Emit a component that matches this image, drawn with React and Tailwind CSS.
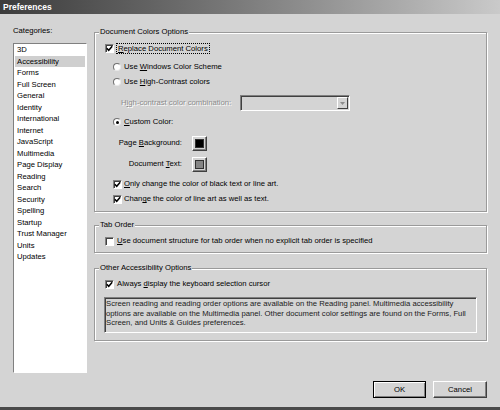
import React from "react";

const categories = [
  "3D",
  "Accessibility",
  "Forms",
  "Full Screen",
  "General",
  "Identity",
  "International",
  "Internet",
  "JavaScript",
  "Multimedia",
  "Page Display",
  "Reading",
  "Search",
  "Security",
  "Spelling",
  "Startup",
  "Trust Manager",
  "Units",
  "Updates",
];

const Check = ({ checked }) => (
  <span className="w-[9px] h-[9px] shrink-0 bg-white border border-t-[#808080] border-l-[#808080] border-b-white border-r-white shadow-[inset_1px_1px_0_#404040] flex items-center justify-center">
    {checked && (
      <svg width="7" height="7" viewBox="0 0 7 7">
        <path d="M0.8 3.3 L2.7 5.3 L6.2 1.2" fill="none" stroke="#000" strokeWidth="1.5" />
      </svg>
    )}
  </span>
);

const Radio = ({ checked }) => (
  <span className="w-[8px] h-[8px] shrink-0 rounded-full bg-white border border-t-[#707070] border-l-[#707070] border-b-[#e8e8e8] border-r-[#e8e8e8] flex items-center justify-center">
    {checked && <span className="w-[3px] h-[3px] rounded-full bg-black" />}
  </span>
);

const Swatch = ({ color }) => (
  <span className="w-[15px] h-[15px] border border-t-white border-l-white border-b-[#404040] border-r-[#404040] shadow-[inset_-1px_-1px_0_#808080] flex items-center justify-center">
    <span className={`w-[9px] h-[9px] border border-[#303030] ${color}`} />
  </span>
);

const Group = ({ title, children, className = "" }) => (
  <fieldset className={`border border-[#9a9a9a] shadow-[inset_1px_1px_0_#fff,1px_1px_0_#fff] px-0 ${className}`}>
    <legend className="ml-[4px] px-[1px] leading-[10px] bg-[#d4d4d4]">{title}</legend>
    {children}
  </fieldset>
);

export default function App() {
  return (
    <div className="w-[500px] h-[410px] bg-[#d4d4d4] flex flex-col overflow-hidden border-b-[3px] border-[#4a4a4a] font-['Liberation_Sans',Arial,sans-serif] text-[7.7px] text-black">
      {/* title bar */}
      <div className="h-[14px] shrink-0 flex items-center pl-[3px] bg-linear-to-r from-[#3c3c3c] via-[#7e7e7e] to-[#cacaca]">
        <span className="text-white font-bold text-[8.5px] leading-none">Preferences</span>
      </div>

      <div className="flex flex-1 px-[13px]">
        {/* categories */}
        <div className="w-[74px] flex flex-col">
          <div className="mt-[12px] leading-[10px]">Categories:</div>
          <div className="mt-[7px] h-[330px] bg-white border border-t-[#808080] border-l-[#808080] border-b-white border-r-white flex flex-col px-[1px]">
            {categories.map((c) => (
              <div
                key={c}
                className={`h-[11.5px] leading-[11.5px] pl-[2px] ${c === "Accessibility" ? "bg-[#cfcfcf]" : ""}`}
              >
                {c}
              </div>
            ))}
          </div>
        </div>

        {/* options */}
        <div className="ml-[7px] w-[393px] flex flex-col">
          <Group title="Document Colors Options" className="mt-[13px] pb-[5px]">
            <div className="mt-[4px] h-[14px] flex items-center pl-[10px] gap-[2px]">
              <Check checked />
              <span className="border border-dotted border-black px-[1px] leading-[9px]">
                <span className="underline">R</span>eplace Document Colors
              </span>
            </div>
            <div className="mt-[5px] h-[14px] flex items-center pl-[18px] gap-[3px]">
              <Radio />
              <span>
                Use <span className="underline">W</span>indows Color Scheme
              </span>
            </div>
            <div className="mt-[1px] h-[14px] flex items-center pl-[18px] gap-[3px]">
              <Radio />
              <span>
                Use <span className="underline">H</span>igh-Contrast colors
              </span>
            </div>
            <div className="mt-[6px] h-[16px] flex items-center pl-[26px]">
              <span className="w-[119px] text-[#8c8c8c] [text-shadow:1px_1px_0_#fff]">
                H<span className="underline">i</span>gh-contrast color combination:
              </span>
              <span className="w-[110px] h-[16px] border border-t-[#808080] border-l-[#808080] border-b-white border-r-white shadow-[inset_1px_1px_0_#404040] flex justify-end items-center pr-[1px]">
                <span className="w-[11px] h-[12px] border border-t-white border-l-white border-b-[#404040] border-r-[#404040] flex items-center justify-center">
                  <svg width="5" height="3" viewBox="0 0 5 3">
                    <path d="M0 0 L5 0 L2.5 3 Z" fill="#8c8c8c" />
                  </svg>
                </span>
              </span>
            </div>
            <div className="mt-[4px] h-[14px] flex items-center pl-[18px] gap-[3px]">
              <Radio checked />
              <span>
                <span className="underline">C</span>ustom Color:
              </span>
            </div>
            <div className="mt-[6px] h-[16px] flex items-center">
              <span className="w-[87px] text-right">
                Page <span className="underline">B</span>ackground:
              </span>
              <span className="ml-[10px]">
                <Swatch color="bg-black" />
              </span>
            </div>
            <div className="mt-[5px] h-[16px] flex items-center">
              <span className="w-[87px] text-right">
                Document <span className="underline">T</span>ext:
              </span>
              <span className="ml-[10px]">
                <Swatch color="bg-[#858585]" />
              </span>
            </div>
            <div className="mt-[5px] h-[14px] flex items-center pl-[18px] gap-[2px]">
              <Check checked />
              <span>
                <span className="underline">O</span>nly change the color of black text or line art.
              </span>
            </div>
            <div className="mt-[1px] h-[14px] flex items-center pl-[18px] gap-[2px]">
              <Check checked />
              <span>
                Chan<span className="underline">g</span>e the color of line art as well as text.
              </span>
            </div>
          </Group>

          <Group title="Tab Order" className="mt-[8px] pb-[4px]">
            <div className="mt-[4px] h-[14px] flex items-center pl-[10px] gap-[3px]">
              <Check />
              <span>
                <span className="underline">U</span>se document structure for tab order when no explicit tab order is specified
              </span>
            </div>
          </Group>

          <Group title="Other Accessibility Options" className="mt-[10px] pb-[7px]">
            <div className="mt-[4px] h-[14px] flex items-center pl-[10px] gap-[3px]">
              <Check checked />
              <span>
                Always <span className="underline">d</span>isplay the keyboard selection cursor
              </span>
            </div>
            <div className="mt-[6px] mx-[9px] h-[36px] border border-t-[#808080] border-l-[#808080] border-b-white border-r-white shadow-[inset_1px_1px_0_#404040] pl-[1px] pt-[1px] leading-[9.5px] text-[#1a1a1a] whitespace-nowrap">
              Screen reading and reading order options are available on the Reading panel. Multimedia accessibility
              <br />
              options are available on the Multimedia panel. Other document color settings are found on the Forms, Full
              <br />
              Screen, and Units &amp; Guides preferences.
            </div>
          </Group>

          <div className="mt-[40px] flex justify-end gap-[7px]">
            <button className="w-[53px] h-[17px] border border-black bg-[#d4d4d4] shadow-[inset_1px_1px_0_#fff,inset_-1px_-1px_0_#808080] flex items-center justify-center">
              OK
            </button>
            <button className="w-[54px] h-[17px] border border-t-white border-l-white border-b-[#404040] border-r-[#404040] bg-[#d4d4d4] shadow-[inset_-1px_-1px_0_#808080] flex items-center justify-center">
              Cancel
            </button>
          </div>
        </div>
      </div>
    </div>
  );
}
